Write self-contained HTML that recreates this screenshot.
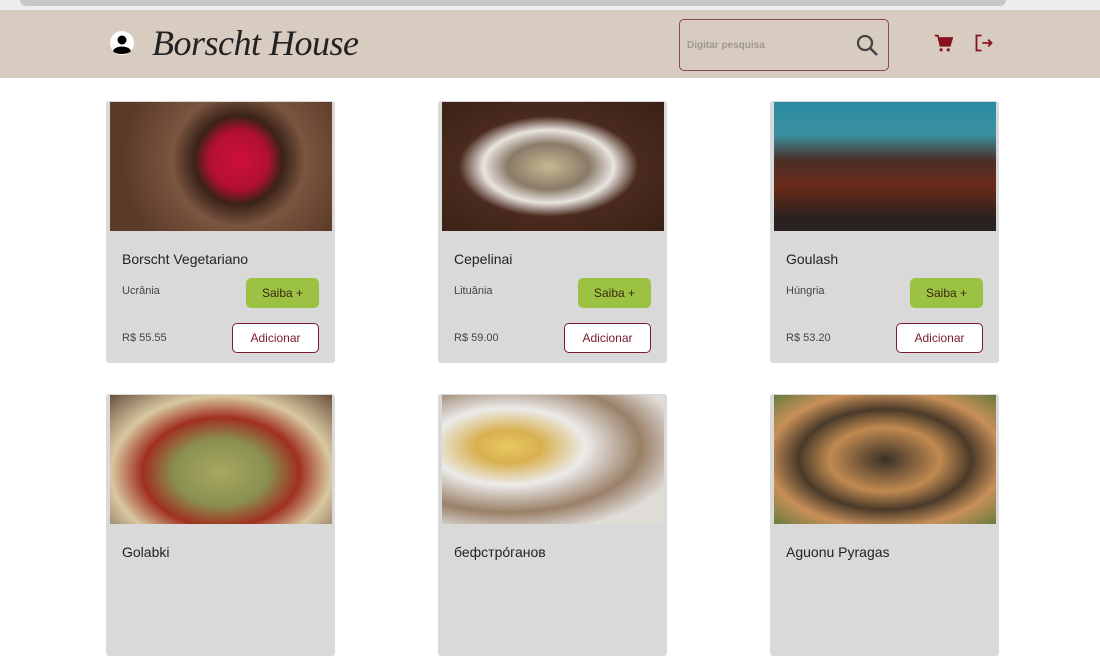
<!DOCTYPE html>
<html><head><meta charset="utf-8"><style>
*{margin:0;padding:0;box-sizing:border-box}
body{width:1100px;height:559px;overflow:hidden;background:#fff;font-family:"Liberation Sans",sans-serif;position:relative}
.top{position:absolute;left:0;top:0;width:1100px;height:10px;background:#ededed}
.top .b{position:absolute;left:20px;top:0;width:986px;height:6px;background:#c6c6c6;border-radius:0 0 8px 8px}
header{position:absolute;left:0;top:10px;width:1100px;height:68px;background:#d8ccc1}
.logo{position:absolute;left:152px;top:12px;font-family:"Liberation Serif",serif;font-style:italic;font-size:36px;color:#222;letter-spacing:-0.5px}
.search{position:absolute;left:679px;top:9px;width:210px;height:52px;border:1px solid #8a4a4a;border-radius:5px}
.search span{position:absolute;left:7px;top:20px;font-size:10px;font-weight:bold;color:#a09890}
.card{position:absolute;width:229px;height:262px;background:#d9d9d9;border-radius:3px}
.img{position:absolute;left:4px;top:1px;width:222px;height:129px}
.t{position:absolute;left:16px;top:150px;font-size:14px;color:#222}
.c{position:absolute;left:16px;top:184px;font-size:11px;color:#444}
.p{position:absolute;left:16px;top:231px;font-size:11px;color:#444}
.s{position:absolute;left:140px;top:177px;width:73px;height:30px;background:#9cc243;border-radius:5px;font-size:12px;color:#3a2a10;text-align:center;line-height:30px}
.a{position:absolute;left:126px;top:222px;width:87px;height:30px;background:#fff;border:1px solid #7a1a2a;border-radius:5px;font-size:12px;color:#7a1a2a;text-align:center;line-height:28px}
</style></head><body>
<div class="top"><div class="b"></div></div>
<header>
<svg style="position:absolute;left:110px;top:21px" width="24" height="24" viewBox="0 0 24 24"><circle cx="12" cy="12" r="12" fill="#fff"/><circle cx="12" cy="9" r="4.5" fill="#000"/><path d="M3 20c2-6 16-6 18 0c-3 4-15 4-18 0z" fill="#000"/></svg>
<div class="logo">Borscht House</div>
<div class="search"><span>Digitar pesquisa</span>
<svg style="position:absolute;left:175px;top:13px" width="24" height="24" viewBox="0 0 24 24"><circle cx="10" cy="10" r="7" fill="none" stroke="#444" stroke-width="2.3"/><path d="M15 15l7 7" stroke="#444" stroke-width="2.5"/></svg></div>
<svg style="position:absolute;left:934px;top:24px" width="19" height="19" viewBox="0 0 24 24"><path d="M1 2h4l3 13h12l3-10H7" fill="#8a1020" stroke="#8a1020" stroke-width="2"/><circle cx="9" cy="20" r="2" fill="#8a1020"/><circle cx="18" cy="20" r="2" fill="#8a1020"/></svg>
<svg style="position:absolute;left:974px;top:23px" width="20" height="20" viewBox="0 0 24 24" fill="none" stroke="#8a1020" stroke-width="2.2"><path d="M9 3H3v18h6M10 12h11M17 8l4 4-4 4"/></svg>
</header>

<div class="card" style="left:106px;top:101px"><div class="img" style="background:radial-gradient(circle at 58% 45%,#d0103a 0,#b01030 20%,#3a2218 30%,#7a5540 45%,#5a3a28 80%)"></div><div class="t">Borscht Vegetariano</div><div class="c">Ucrânia</div><div class="s">Saiba +</div><div class="p">R$ 55.55</div><div class="a">Adicionar</div></div>
<div class="card" style="left:438px;top:101px"><div class="img" style="background:radial-gradient(ellipse at 48% 50%,#c8b890 0,#8a7a68 25%,#e8e4e0 40%,#4a2a1e 55%,#3a2016 100%)"></div><div class="t">Cepelinai</div><div class="c">Lituânia</div><div class="s">Saiba +</div><div class="p">R$ 59.00</div><div class="a">Adicionar</div></div>
<div class="card" style="left:770px;top:101px"><div class="img" style="background:linear-gradient(180deg,#2a8aa0 0,#3a90a0 25%,#4a3028 45%,#6a2a18 65%,#2a2220 90%)"></div><div class="t">Goulash</div><div class="c">Húngria</div><div class="s">Saiba +</div><div class="p">R$ 53.20</div><div class="a">Adicionar</div></div>

<div class="card" style="left:106px;top:394px"><div class="img" style="background:radial-gradient(ellipse at 50% 60%,#a8a860 0,#8a9050 30%,#a03020 50%,#d8c8a0 70%,#6a5040 100%)"></div><div class="t">Golabki</div></div>
<div class="card" style="left:438px;top:394px"><div class="img" style="background:radial-gradient(ellipse at 30% 40%,#e8c860 0,#d8b050 15%,#ecebea 35%,#9a8068 60%,#e0dcd8 80%)"></div><div class="t">бефстро́ганов</div></div>
<div class="card" style="left:770px;top:394px"><div class="img" style="background:radial-gradient(ellipse at 50% 50%,#3a3028 0,#c08a50 35%,#4a3a2a 55%,#c89058 75%,#6a7a40 100%)"></div><div class="t">Aguonu Pyragas</div></div>
</body></html>
